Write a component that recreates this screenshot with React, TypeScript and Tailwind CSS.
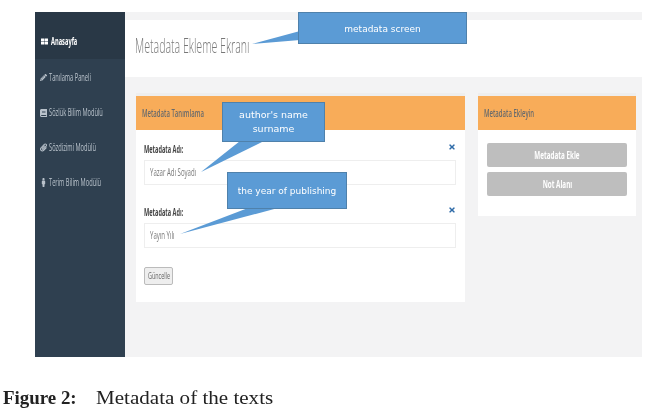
import { FaThLarge, FaPencilAlt, FaBook, FaPaperclip, FaMale, FaTimes } from 'react-icons/fa'
import type { ReactNode } from 'react'

const NAV = [
  { label: 'Tanılama Paneli', icon: <FaPencilAlt className="w-[7px] h-[7px]" /> },
  { label: 'Sözlük Bilim Modülü', icon: <FaBook className="w-[7px] h-[8px]" /> },
  { label: 'Sözdizimi Modülü', icon: <FaPaperclip className="w-[7px] h-[9px]" /> },
  { label: 'Terim Bilim Modülü', icon: <FaMale className="w-[7px] h-[9px]" /> },
]

// the screenshot is squeezed horizontally, so text gets narrowed from its left edge
function Squeezed({ children, className = '' }: { children: ReactNode; className?: string }) {
  return <span className={`inline-block origin-left whitespace-nowrap ${className}`}>{children}</span>
}

function Field({ placeholder }: { placeholder: string }) {
  return (
    <div>
      <div className="flex items-center justify-between h-[14px]">
        <Squeezed className="scale-x-[0.56] text-[10px] font-bold text-[#444]">Metadata Adı:</Squeezed>
        <FaTimes className="w-[6px] h-[8px] mb-[4px] mr-px shrink-0 text-[#2f6ba8]" />
      </div>
      <div className="mt-[4px] h-[25px] border border-[#eeeeee] bg-white pl-[5px] flex items-center">
        <Squeezed className="scale-x-[0.55] text-[11px] text-[#777]">{placeholder}</Squeezed>
      </div>
    </div>
  )
}

function Callout({ className, children }: { className: string; children: ReactNode }) {
  return (
    <div className={`absolute flex items-center justify-center text-center bg-[#5b9bd5] border border-[#4f81ab] text-white leading-[14px] font-['DejaVu_Sans',sans-serif] ${className}`}>
      {children}
    </div>
  )
}

function GreyButton({ children }: { children: ReactNode }) {
  return (
    <div className="h-[24px] bg-[#bebebe] rounded-[2px] flex items-center justify-center">
      <span className="inline-block scale-x-[0.63] whitespace-nowrap text-[10px] font-bold text-white">{children}</span>
    </div>
  )
}

export default function App() {
  return (
    <div className="relative w-[651px] h-[412px] overflow-hidden bg-white pl-[35px] pt-[12px] blur-[0.4px] font-['Open_Sans',sans-serif]">
      <div className="flex w-[607px] h-[345px]">
        {/* Sidebar */}
        <aside className="w-[90px] bg-[#2f4050] text-[#b9c2cb] text-[10px]">
          <div className="h-[47px] bg-[#293846] flex items-end pb-[10px] pl-[6px] gap-[3px] text-white">
            <FaThLarge className="w-[7px] h-[7px] mb-[4px] shrink-0" />
            <Squeezed className="scale-x-[0.57] font-bold">Anasayfa</Squeezed>
          </div>
          <div className="flex flex-col">
            {NAV.map((n) => (
              <div key={n.label} className="h-[35px] flex items-center pl-[5px] gap-[2px] first:mt-[1px]">
                <span className="w-[7px] shrink-0 flex justify-center">{n.icon}</span>
                <Squeezed className="scale-x-[0.57]">{n.label}</Squeezed>
              </div>
            ))}
          </div>
        </aside>

        {/* Main */}
        <main className="flex-1 bg-[#f3f3f4] pt-[8px]">
          <div className="h-[57px] bg-white flex items-center pl-[10px] pb-[6px]">
            <Squeezed className="scale-x-[0.53] text-[20px] font-light text-[#777]">Metadata Ekleme Ekranı</Squeezed>
          </div>
          <div className="flex items-start pt-[16px] pl-[11px] gap-[13px]">
            <section className="w-[329px] h-[209px] bg-white border-t-[3px] border-[#eeeeee]">
              <header className="h-[34px] bg-[#f8ac59] flex items-center pl-[6px]">
                <Squeezed className="scale-x-[0.6] text-[10px] font-semibold text-[#676a6c]">Metadata Tanımlama</Squeezed>
              </header>
              <div className="pl-[8px] pr-[9px] pt-[12px]">
                <Field placeholder="Yazar Adı Soyadı" />
                <div className="mt-[20px]">
                  <Field placeholder="Yayın Yılı" />
                </div>
                <button className="mt-[19px] w-[29px] h-[18px] bg-[#eeeeee] border border-[#bbbbbb] rounded-[2px] flex items-center pl-[3px] overflow-hidden">
                  <Squeezed className="scale-x-[0.6] text-[9px] text-[#666]">Güncelle</Squeezed>
                </button>
              </div>
            </section>
            <section className="w-[158px] h-[123px] bg-white border-t-[3px] border-[#eeeeee]">
              <header className="h-[34px] bg-[#f8ac59] flex items-center pl-[6px]">
                <Squeezed className="scale-x-[0.6] text-[10px] font-semibold text-[#676a6c]">Metadata Ekleyin</Squeezed>
              </header>
              <div className="px-[9px] pt-[13px] flex flex-col gap-[5px]">
                <GreyButton>Metadata Ekle</GreyButton>
                <GreyButton>Not Alanı</GreyButton>
              </div>
            </section>
          </div>
        </main>
      </div>

      {/* Caption */}
      <p className="absolute left-[3px] top-[387px] text-[#222] text-[18px] leading-[22px] font-['Liberation_Serif',serif] flex">
        <b className="w-[93px] inline-block origin-left scale-x-[1.05] whitespace-nowrap">Figure 2:</b>
        <span className="inline-block origin-left scale-x-[1.17] whitespace-nowrap">Metadata of the texts</span>
      </p>

      {/* Annotation tails */}
      <svg className="absolute left-0 top-0" width="651" height="412" viewBox="0 0 651 412">
        <polygon points="300,31 252,44 300,40" fill="#5b9bd5" />
        <polygon points="240,141 201,172 264,141" fill="#5b9bd5" />
        <polygon points="248,208 180,234 278,208" fill="#5b9bd5" />
      </svg>

      <Callout className="left-[298px] top-[12px] w-[169px] h-[32px] text-[9px] pt-[2px]">metadata screen</Callout>
      <Callout className="left-[222px] top-[102px] w-[103px] h-[40px] text-[9.5px]">
        author's name
        <br />
        surname
      </Callout>
      <Callout className="left-[227px] top-[172px] w-[120px] h-[37px] text-[9px] whitespace-nowrap">the year of publishing</Callout>
    </div>
  )
}
